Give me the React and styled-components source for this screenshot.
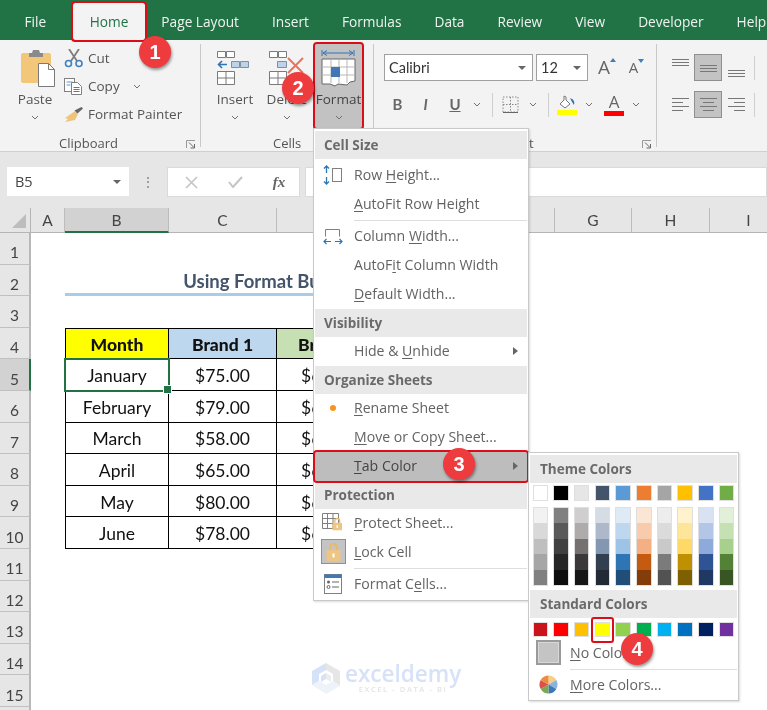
import React from 'react';
import styled, { createGlobalStyle } from 'styled-components';

const UI = "'Open Sans', 'Noto Sans', sans-serif";
const SHEET = "Lato, 'Liberation Sans', sans-serif";
const GREEN = '#217346';
const RED = '#dc0d17';

const GlobalStyle = createGlobalStyle`
    html, body {
        margin: 0;
        padding: 0;
        background: #fff;
    }
    * {
        box-sizing: border-box;
    }
`;

const Page = styled.div`
    position: relative;
    width: 767px;
    height: 710px;
    overflow: hidden;
    font-family: ${UI};
    color: #555;
    background: #fff;
    filter: blur(0.3px);
`;

const TabBar = styled.div`
    height: 40px;
    display: flex;
    align-items: flex-end;
    padding-left: 8px;
    background: ${GREEN};
`;

const Tab = styled.div`
    height: ${props => (props.$active ? '37px' : '40px')};
    line-height: ${props => (props.$active ? '37px' : '44px')};
    padding: 0 16.5px;
    font-size: 13.7px;
    white-space: nowrap;
    color: ${props => (props.$active ? GREEN : '#eef4f0')};
    background: ${props => (props.$active ? '#f3f3f3' : 'transparent')};
    outline: ${props => (props.$active ? `2px solid ${RED}` : 'none')};
    border-radius: 2px;

    &:first-child {
        padding-right: 27px;
    }
`;

const Ribbon = styled.div`
    height: 112px;
    display: flex;
    padding-top: 4px;
    background: #f3f3f3;
    border-bottom: 1px solid #cfcfcf;
`;

const Group = styled.div`
    width: ${props => props.$w}px;
    height: 103px;
    flex: none;
    display: flex;
    flex-direction: column;
    padding: ${props => props.$pad || '0'};
    border-right: ${props => (props.$last ? 'none' : '1px solid #c8c8c8')};
`;

const GroupBody = styled.div`
    height: ${props => props.$h || 84}px;
    flex: none;
    display: flex;
    flex-direction: ${props => (props.$column ? 'column' : 'row')};
    gap: ${props => props.$gap || 0}px;
`;

const GroupFooter = styled.div`
    height: 16px;
    margin-top: 6px;
    display: grid;
    grid-template-columns: ${props => (props.$left ? `${props.$left}px` : '1fr')} auto 1fr;
    align-items: center;
    font-size: 13px;
    color: #555;

    svg {
        justify-self: end;
        margin-right: 4px;
        margin-top: 2px;
    }
`;

const BigButton = styled.div`
    position: relative;
    width: ${props => props.$w}px;
    height: 84px;
    flex: none;
    display: flex;
    flex-direction: column;
    align-items: center;
    font-size: 13.5px;
    line-height: 17px;
    color: ${props => (props.$active ? '#444' : 'inherit')};
    background: ${props => (props.$active ? '#c2c2c2' : 'transparent')};
    outline: ${props => (props.$active ? `2px solid ${RED}` : 'none')};
    border-radius: 2px;
`;

const BigIcon = styled.div`
    height: 47px;
    display: flex;
    align-items: center;
    padding-left: ${props => props.$shift || 0}px;
`;

const BigChevron = styled.div`
    margin-top: 7px;
    line-height: 0;
`;

const SmallColumn = styled.div`
    display: flex;
    flex-direction: column;
`;

const SmallButton = styled.div`
    height: 28px;
    display: flex;
    align-items: center;
    font-size: 13.5px;
    white-space: nowrap;
`;

const SmallIcon = styled.span`
    width: 24px;
    flex: none;
    line-height: 0;
`;

const SplitChevron = styled.span`
    margin-left: 13px;
    line-height: 0;
`;

const ToolRow = styled.div`
    height: 27px;
    display: flex;
    align-items: center;
`;

const Combo = styled.div`
    width: ${props => props.$w}px;
    height: 27px;
    flex: none;
    margin-right: ${props => props.$gap || 0}px;
    display: flex;
    align-items: center;
    justify-content: space-between;
    padding: 0 6px 0 4px;
    background: #fff;
    border: 1px solid #a0a0a0;
    font-family: ${SHEET};
    font-size: 14.5px;
    color: #333;
`;

const Caret = styled.span`
    width: 0;
    height: 0;
    border-left: 4px solid transparent;
    border-right: 4px solid transparent;
    border-top: 4px solid #666;
`;

const Tool = styled.div`
    width: ${props => props.$w}px;
    height: 27px;
    flex: none;
    display: flex;
    flex-direction: column;
    align-items: center;
    justify-content: center;
    line-height: 0;
    color: #666;
    font-family: ${SHEET};
    background: ${props => (props.$on ? '#c3c3c3' : 'transparent')};
    border: 1px solid ${props => (props.$on ? '#8f8f8f' : 'transparent')};
`;

const ToolLetter = styled.span`
    font-size: ${props => props.$size || 15}px;
    line-height: ${props => props.$size || 15}px;
    font-weight: ${props => (props.$plain ? 400 : 700)};
    font-style: ${props => (props.$italic ? 'italic' : 'normal')};
    text-decoration: ${props => (props.$under ? 'underline' : 'none')};
    font-family: ${props => (props.$plain ? UI : SHEET)};
`;

const ColorBar = styled.span`
    width: 20px;
    height: 5px;
    margin-top: 1px;
    background: ${props => props.$color};
`;

const Sized = styled.span`
    display: flex;
    align-items: flex-start;
`;

const SizeArrow = styled.span`
    width: 0;
    height: 0;
    margin-top: ${props => (props.$down ? -1 : 0)}px;
    border-left: 3.5px solid transparent;
    border-right: 3.5px solid transparent;
    border-bottom: ${props => (props.$down ? 'none' : '4px solid #3d7ebd')};
    border-top: ${props => (props.$down ? '4px solid #3d7ebd' : 'none')};
`;

const ToolSep = styled.span`
    width: 1px;
    height: 24px;
    flex: none;
    margin-left: ${props => props.$l}px;
    margin-right: 6px;
    background: #cfcfcf;
`;

const FormulaBar = styled.div`
    height: 56px;
    display: flex;
    align-items: flex-start;
    padding-top: 15px;
    background: #e6e6e6;
`;

const NameBox = styled.div`
    width: 122px;
    height: 29px;
    margin-left: 7px;
    display: flex;
    align-items: center;
    justify-content: space-between;
    padding: 0 8px;
    background: #fff;
    font-size: 14.5px;
    color: #444;
`;

const Grip = styled.div`
    width: 38px;
    height: 29px;
    display: flex;
    align-items: center;
    justify-content: center;
    font-size: 14px;
    color: #888;
    line-height: 1;
`;

const FxBox = styled.div`
    width: 133px;
    height: 30px;
    display: flex;
    align-items: center;
    background: #fff;
    border: 1px solid #dadada;
`;

const FxSlot = styled.span`
    width: 44px;
    flex: none;
    display: flex;
    justify-content: center;
    font-family: 'Liberation Serif', serif;
    font-style: italic;
    font-weight: 700;
    font-size: 15px;
    color: #666;
    margin-left: ${props => props.$l || 0}px;
`;

const FormulaInput = styled.div`
    flex: 1;
    height: 30px;
    margin-left: 5px;
    background: #fff;
    border: 1px solid #dadada;
`;

const GRID_COLUMNS = '31px 34px 104px 108px 104px 87px 87px 77px 78px 78px';

const Row = styled.div`
    display: grid;
    grid-template-columns: ${GRID_COLUMNS};
    height: ${props => props.$h || 31.6}px;
`;

const Corner = styled.div`
    position: relative;
    background: #e6e6e6;
    border-right: 1px solid #b5b5b5;
    border-bottom: 1px solid #b5b5b5;
    display: flex;
    align-items: flex-end;
    justify-content: flex-end;
    padding: 0 4px 4px 0;
`;

const ColHead = styled.div`
    display: flex;
    align-items: center;
    justify-content: center;
    font-family: ${SHEET};
    font-size: 15.5px;
    color: #444;
    background: ${props => (props.$sel ? '#d2d2d2' : '#e6e6e6')};
    border-right: 1px solid #bcbcbc;
    border-bottom: ${props => (props.$sel ? `2px solid ${GREEN}` : '1px solid #b5b5b5')};
`;

const RowHead = styled.div`
    display: flex;
    align-items: center;
    justify-content: center;
    padding-top: 8px;
    font-family: ${SHEET};
    font-size: 15.5px;
    color: #444;
    background: ${props => (props.$sel ? '#d2d2d2' : '#e6e6e6')};
    border-right: 2px solid ${props => (props.$sel ? GREEN : '#b8b8b8')};
    border-bottom: 1px solid #c0c0c0;
`;

const Title = styled.div`
    grid-column: span 4;
    display: flex;
    align-items: center;
    justify-content: center;
    padding: 5px 0 0 4px;
    font-family: ${SHEET};
    font-size: 18.5px;
    font-weight: 700;
    color: #44546a;
    border-bottom: 3px solid #a9cce8;
`;

const Cell = styled.div`
    position: relative;
    z-index: ${props => (props.$selected ? 1 : 0)};
    display: flex;
    align-items: center;
    justify-content: center;
    padding-top: 2px;
    font-family: ${SHEET};
    font-size: 17.5px;
    font-weight: ${props => (props.$bold ? 900 : 400)};
    color: #111;
    background: ${props => props.$fill || '#fff'};
    border-right: 1px solid #000;
    border-bottom: 1px solid #000;
    border-top: ${props => (props.$top ? '1px solid #000' : 'none')};
    border-left: ${props => (props.$first ? '1px solid #000' : 'none')};
    outline: ${props => (props.$selected ? `2px solid ${GREEN}` : 'none')};
    outline-offset: -1px;

    ${props =>
        props.$selected &&
        `&::after {
            content: '';
            position: absolute;
            right: -4px;
            bottom: -4px;
            width: 7px;
            height: 7px;
            background: ${GREEN};
            border: 1px solid #fff;
        }`}
`;

const Menu = styled.div`
    position: absolute;
    left: 313px;
    top: 128px;
    width: 216px;
    height: 473px;
    padding: 2px 1px;
    background: #fff;
    border: 1px solid #c9c9c9;
    box-shadow: 1px 1px 2px rgba(0, 0, 0, 0.15);
    z-index: 3;
`;

const MenuHeader = styled.div`
    height: 28px;
    margin-bottom: ${props => props.$after || 0}px;
    margin-top: ${props => props.$before || 0}px;
    display: flex;
    align-items: center;
    padding-left: ${props => props.$pad || 9}px;
    font-size: 13.5px;
    font-weight: 700;
    color: #6a6a6a;
    background: #e9e9e9;
`;

const MenuItem = styled.div`
    position: relative;
    height: 29px;
    margin-top: ${props => props.$before || 0}px;
    padding-bottom: 2px;
    display: flex;
    align-items: center;
    font-size: 14.1px;
    color: ${props => (props.$active ? '#444' : '#636363')};
    white-space: nowrap;
    background: ${props => (props.$active ? '#bdbdbd' : 'transparent')};
    outline: ${props => (props.$active ? `2px solid ${RED}` : 'none')};
    border-radius: 2px;

    u {
        text-underline-offset: 2px;
    }
`;

const ItemIcon = styled.span`
    width: ${props => props.$w || 39}px;
    flex: none;
    display: flex;
    justify-content: center;
    padding-right: 3px;
`;

const ItemArrow = styled.span`
    width: 0;
    height: 0;
    margin-left: auto;
    margin-right: 9px;
    border-top: 4.5px solid transparent;
    border-bottom: 4.5px solid transparent;
    border-left: 5px solid #666;
`;

const MenuLine = styled.div`
    height: 1px;
    margin: 1px 0 1px ${props => props.$l || 39}px;
    background: #dedede;
`;

const Dot = styled.span`
    width: 6px;
    height: 6px;
    border-radius: 50%;
    background: #f7941d;
`;

const Submenu = styled.div`
    position: absolute;
    left: 528px;
    top: 452px;
    width: 211px;
    height: 249px;
    padding: 2px 1px;
    background: #fff;
    border: 1px solid #c9c9c9;
    box-shadow: 1px 1px 2px rgba(0, 0, 0, 0.15);
    z-index: 4;
`;

const SwatchGrid = styled.div`
    display: grid;
    grid-template-columns: repeat(10, 15.6px);
    column-gap: 5.1px;
    padding-left: 2.5px;
    margin-top: ${props => props.$top}px;
`;

const Swatch = styled.div`
    position: relative;
    height: ${props => props.$h || 16}px;
    background: ${props => props.$color};
    border: 1px solid #dfdfdf;

    ${props =>
        props.$marked &&
        `&::after {
            content: '';
            position: absolute;
            inset: -6px -5px -7px -5px;
            border: 2px solid ${RED};
            border-radius: 3px;
        }`}
`;

const ShadeColumn = styled.div`
    display: flex;
    flex-direction: column;
    border: 1px solid #dfdfdf;
`;

const Shade = styled.div`
    height: 15.4px;
    background: ${props => props.$color};
`;

const NoColorBox = styled.span`
    width: 25px;
    height: 25px;
    background: #c4c4c4;
    border: 2px solid #9a9a9a;
    box-shadow: inset 0 0 0 1px #d8d8d8;
`;

const Badge = styled.div`
    position: absolute;
    left: ${props => props.$x - 16}px;
    top: ${props => props.$y - 16}px;
    width: 32px;
    height: 32px;
    display: flex;
    align-items: center;
    justify-content: center;
    border-radius: 50%;
    background: #ee3b3e;
    color: #fff;
    font-family: 'Liberation Sans', sans-serif;
    font-weight: 700;
    font-size: 20px;
    box-shadow: 1px 2px 3px rgba(0, 0, 0, 0.4);
    z-index: 6;
`;

const Watermark = styled.div`
    position: absolute;
    left: 312px;
    top: 663px;
    display: flex;
    gap: 5px;
    z-index: 2;
`;

const WatermarkText = styled.div`
    display: flex;
    flex-direction: column;
    align-items: center;
`;

const WatermarkName = styled.span`
    font-family: ${UI};
    font-size: 22.5px;
    line-height: 22px;
    font-weight: 600;
    color: #d7e2f8;
`;

const WatermarkTag = styled.span`
    font-family: ${UI};
    font-size: 7.5px;
    line-height: 9px;
    font-weight: 600;
    letter-spacing: 1.6px;
    color: #e4e4e4;
`;

/* ---- icons ---- */

const Chevron = () => (
    <svg width="8" height="5" viewBox="0 0 8 5">
        <path d="M1 1l3 3 3-3" fill="none" stroke="#707070" strokeWidth="1" />
    </svg>
);

const Launcher = () => (
    <svg width="10" height="9" viewBox="0 0 10 9">
        <path d="M.5 8V.5H9" fill="none" stroke="#999" />
        <path d="M3 2.500l5 5M8.500 4v4h-4" fill="none" stroke="#666" />
    </svg>
);

const PasteIcon = () => (
    <svg width="36" height="38" viewBox="0 0 36 38">
        <rect x="1" y="4" width="30" height="30" rx="2" fill="#f2c77a" />
        <path d="M9 4h3l1-3h6l1 3h3v4H9z" fill="#8a8a8a" />
        <path d="M18.500 14.500h10l6 6v17h-16z" fill="#fff" stroke="#7a7a7a" />
        <path d="M28.500 14.500v6h6" fill="none" stroke="#7a7a7a" />
    </svg>
);

const CutIcon = () => (
    <svg width="20" height="19" viewBox="0 0 20 19">
        <path d="M5 0l8 12M15 0L7 12" stroke="#7d7d7d" strokeWidth="1.8" fill="none" />
        <circle cx="4.500" cy="14.500" r="3" fill="none" stroke="#3f7ebf" strokeWidth="1.6" />
        <circle cx="15" cy="14.500" r="3" fill="none" stroke="#3f7ebf" strokeWidth="1.6" />
    </svg>
);

const CopyIcon = () => (
    <svg width="19" height="17" viewBox="0 0 19 17">
        <rect x=".5" y=".5" width="10" height="13" fill="#fff" stroke="#808080" />
        <path d="M2.500 4h6M2.500 7h4" stroke="#5b9bd5" />
        <path d="M7.500 4.500h6l4 4v8h-10z" fill="#fff" stroke="#808080" />
        <path d="M9.500 9.500h6M9.500 11.500h6M9.500 13.500h6" stroke="#3f7ebf" />
    </svg>
);

const PainterIcon = () => (
    <svg width="20" height="17" viewBox="0 0 20 17">
        <path d="M11 5l3 3-3 6-10 2 3-3-3-1 3-2z" fill="#eec47b" />
        <path d="M10.500 4.500l3 3L19 2.500 17.500 1z" fill="#666" />
    </svg>
);

const CellStack = ({ children }) => (
    <svg width="36" height="34" viewBox="0 0 36 34">
        <path d="M.5.500h8v6h-8zM9.500.500h8v6h-8z" fill="#fff" stroke="#7a7a7a" />
        <path d="M.5 20.500h17v13H.5zM9 20.500v13M.5 27h17" fill="#fff" stroke="#7a7a7a" />
        {children}
    </svg>
);

const InsertIcon = () => (
    <CellStack>
        <path d="M14.500 10.500h8v6h-8zM23.500 10.500h8v6h-8z" fill="#bcd3ea" stroke="#7f8f9f" />
        <path d="M1 13.500h9M5 10l-3.500 3.500L5 17" fill="none" stroke="#2e75b6" strokeWidth="1.600" />
    </CellStack>
);

const DeleteIcon = () => (
    <CellStack>
        <path d="M8.500 10.500h9v6h-9z" fill="#bcd3ea" stroke="#7f8f9f" />
        <path d="M19 7l15 15M34 7L19 22" stroke="#e8735f" strokeWidth="2" fill="none" />
    </CellStack>
);

const FormatIcon = () => (
    <svg width="36" height="38" viewBox="0 0 36 38">
        <path d="M1 1v6M33 1v6M2 4h30M6 1.500L2 4l4 2.500M28 1.500L32 4l-4 2.500" fill="none" stroke="#2e75b6" />
        <path d="M1 10h33v22l-5 1-3 3-9-1-3 2-5-2H1z" fill="#fff" stroke="#666" />
        <path d="M1 18h33M1 26h33M10 10v24M18 10v24M26 10v24" stroke="#b8b8b8" />
        <rect x="10" y="18" width="9" height="10" fill="#3f78b5" />
    </svg>
);

const BordersIcon = () => (
    <svg width="17" height="17" viewBox="0 0 17 17">
        <path d="M1 1h15v15H1zM8.500 1v15M1 8.500h15" fill="none" stroke="#888" strokeDasharray="1.500 1.500" />
        <path d="M1 16.500h15" stroke="#666" />
    </svg>
);

const FillIcon = () => (
    <svg width="20" height="14" viewBox="0 0 20 14">
        <path d="M7 1l2 1v3l4 4-5 4-5-4 4-4z" fill="#fff" stroke="#777" />
        <path d="M13 3c3 1 5 3 4 7l-2-3z" fill="#2e75b6" />
    </svg>
);

const LINE_SETS = {
    top: { y: [1, 4, 7], x: [[1, 18], [1, 18], [1, 18]] },
    middle: { y: [7, 10, 13], x: [[1, 18], [1, 18], [1, 18]] },
    bottom: { y: [12, 15, 18], x: [[1, 18], [1, 18], [1, 18]] },
    left: { y: [3, 7, 11, 15], x: [[1, 18], [1, 12], [1, 18], [1, 12]] },
    center: { y: [3, 7, 11, 15], x: [[1, 18], [4, 15], [1, 18], [4, 15]] },
    right: { y: [3, 7, 11, 15], x: [[1, 18], [7, 18], [1, 18], [7, 18]] }
};

const AlignIcon = ({ kind }) => {
    const set = LINE_SETS[kind];
    return (
        <svg width="19" height="20" viewBox="0 0 19 20">
            {set.y.map((y, i) => (
                <path key={y} d={`M${set.x[i][0]} ${y}.5H${set.x[i][1]}`} stroke="#777" />
            ))}
        </svg>
    );
};

const RowHeightIcon = () => (
    <svg width="20" height="20" viewBox="0 0 20 20">
        <path d="M3.500 1v7M1 3.500l2.500-2.500L6 3.500M3.500 12v7M1 16.500L3.500 19 6 16.500" fill="none" stroke="#2e75b6" strokeWidth="1.300" />
        <rect x="9.500" y="3.500" width="9" height="13" fill="none" stroke="#808080" />
    </svg>
);

const ColWidthIcon = () => (
    <svg width="20" height="18" viewBox="0 0 20 18">
        <path d="M2.500 9.500v-7h14v7" fill="none" stroke="#808080" />
        <path d="M1 14.500h7M3.500 12L1 14.500 3.500 17M12 14.500h7M16.500 12l2.500 2.500-2.500 2.500" fill="none" stroke="#2e75b6" strokeWidth="1.200" />
    </svg>
);

const Padlock = ({ x, y, s = 1 }) => (
    <g transform={`translate(${x} ${y}) scale(${s})`}>
        <path d="M2.500 5V3a2.500 2.500 0 015 0v2" fill="none" stroke="#e8b96b" strokeWidth="1.400" />
        <rect x="0" y="5" width="10" height="8" rx="1" fill="#efc583" />
        <rect x="4.300" y="7.500" width="1.400" height="3" fill="#fff" />
    </g>
);

const ProtectIcon = () => (
    <svg width="22" height="20" viewBox="0 0 22 20">
        <path d="M.5.500h16v15H.5zM.5 5.500h16M.5 10.500h16M5.500.5v15M11 .5v15" fill="none" stroke="#808080" />
        <Padlock x={10.500} y={5} s={0.95} />
    </svg>
);

const LockBox = styled.span`
    width: 25px;
    height: 25px;
    display: flex;
    align-items: center;
    justify-content: center;
    background: #c4c4c4;
    border: 1px solid #8f8f8f;
`;

const LockIcon = () => (
    <svg width="15" height="18" viewBox="0 0 10 13">
        <Padlock x={0} y={0} />
    </svg>
);

const FormatCellsIcon = () => (
    <svg width="18" height="20" viewBox="0 0 18 20">
        <rect x=".5" y=".5" width="17" height="19" fill="#fff" stroke="#808080" />
        <rect x=".5" y=".5" width="17" height="3.500" fill="#3f78b5" />
        <path d="M8 8h7M8 13h7" stroke="#666" />
        <circle cx="4.500" cy="8" r="1.500" fill="#666" />
        <circle cx="4.500" cy="13" r="1.500" fill="none" stroke="#666" />
    </svg>
);

const PieIcon = () => (
    <svg width="19" height="19" viewBox="0 0 19 19">
        <path d="M9.500 9.500V.5a9 9 0 017.800 4.500z" fill="#f3cf89" />
        <path d="M9.500 9.500l7.800-4.500a9 9 0 010 9z" fill="#8bb4dd" />
        <path d="M9.500 9.500l7.800 4.500a9 9 0 01-7.800 4.500z" fill="#3f78b5" />
        <path d="M9.500 9.500v9a9 9 0 01-7.800-4.500z" fill="#78a85a" />
        <path d="M9.500 9.500l-7.800 4.500a9 9 0 010-9z" fill="#d9534a" />
        <path d="M9.500 9.500L1.700 5A9 9 0 019.500.5z" fill="#ed8b3f" />
    </svg>
);

const LogoMark = () => (
    <svg width="28" height="31" viewBox="0 0 28 31">
        <path d="M14 0L0 8v14l7-4v-7l7-4z" fill="#d6e2f7" />
        <path d="M14 0l14 8v15l-7-5v-7l-7-4z" fill="#e6e6e6" />
        <path d="M0 22l14 9 14-8-7-5-7 4-7-4z" fill="#eef3fb" />
        <path d="M9 13l5-3v6l-5 3z" fill="#d6e2f7" />
        <path d="M14 10l5 3v6l-5-3z" fill="#ececec" />
    </svg>
);

const CornerMark = () => (
    <svg width="14" height="14" viewBox="0 0 14 14">
        <path d="M14 0v14H0z" fill="#bdbdbd" />
    </svg>
);

/* ---- data ---- */

const TABS = ['File', 'Home', 'Page Layout', 'Insert', 'Formulas', 'Data', 'Review', 'View', 'Developer', 'Help'];
const COLS = ['A', 'B', 'C', 'D', 'E', 'F', 'G', 'H', 'I'];
const TABLE = {
    5: ['January', '$75.00', '$60.00'],
    6: ['February', '$79.00', '$65.00'],
    7: ['March', '$58.00', '$62.00'],
    8: ['April', '$65.00', '$68.00'],
    9: ['May', '$80.00', '$60.00'],
    10: ['June', '$78.00', '$69.00']
};
const ROWS = Array.from({ length: 15 }, (_, i) => i + 1);

const THEME = [
    ['#ffffff', ['#f2f2f2', '#d9d9d9', '#bfbfbf', '#a6a6a6', '#808080']],
    ['#000000', ['#808080', '#595959', '#404040', '#262626', '#0d0d0d']],
    ['#e7e6e6', ['#d0cece', '#aeabab', '#757171', '#3a3838', '#171717']],
    ['#44546a', ['#d6dce4', '#adb9ca', '#8497b0', '#323f4f', '#222b35']],
    ['#5b9bd5', ['#deebf6', '#bdd7ee', '#9dc3e6', '#2e75b5', '#1f4e79']],
    ['#ed7d31', ['#fbe5d5', '#f7cbac', '#f4b083', '#c55a11', '#843c0b']],
    ['#a5a5a5', ['#ededed', '#dbdbdb', '#c9c9c9', '#7b7b7b', '#525252']],
    ['#ffc000', ['#fff2cc', '#fee599', '#ffd965', '#bf9000', '#7f6000']],
    ['#4472c4', ['#d9e2f3', '#b4c6e7', '#8eaadb', '#2f5496', '#1f3864']],
    ['#70ad47', ['#e2efd9', '#c5e0b3', '#a8d08d', '#538135', '#375623']]
];
const STANDARD = ['#c8141a', '#ff0000', '#ffc000', '#ffff00', '#92d050', '#00b050', '#00b0f0', '#0070c0', '#002060', '#7030a0'];

const SheetRow = ({ n }) => {
    const data = TABLE[n];
    const selected = n === 5;
    return (
        <Row>
            <RowHead $sel={selected}>{n}</RowHead>
            <div />
            {n === 2 && <Title>Using Format Button</Title>}
            {n === 4 && (
                <>
                    <Cell $bold $top $first $fill="#ffff00">Month</Cell>
                    <Cell $bold $top $fill="#bdd7ee">Brand 1</Cell>
                    <Cell $bold $top $fill="#c6e0b4">Brand 2</Cell>
                </>
            )}
            {data && (
                <>
                    <Cell $first $selected={selected}>{data[0]}</Cell>
                    <Cell>{data[1]}</Cell>
                    <Cell>{data[2]}</Cell>
                </>
            )}
        </Row>
    );
};

const ClipboardGroup = () => (
    <Group $w={201} $pad="0 0 0 8px">
        <GroupBody $gap={2}>
            <BigButton $w={54}>
                <BigIcon $shift={6}><PasteIcon /></BigIcon>
                Paste
                <BigChevron><Chevron /></BigChevron>
            </BigButton>
            <SmallColumn>
                <SmallButton><SmallIcon><CutIcon /></SmallIcon>Cut</SmallButton>
                <SmallButton>
                    <SmallIcon><CopyIcon /></SmallIcon>Copy
                    <SplitChevron><Chevron /></SplitChevron>
                </SmallButton>
                <SmallButton><SmallIcon><PainterIcon /></SmallIcon>Format Painter</SmallButton>
            </SmallColumn>
        </GroupBody>
        <GroupFooter $left={51}><span />Clipboard<Launcher /></GroupFooter>
    </Group>
);

const CellsGroup = () => (
    <Group $w={173} $pad="0 0 0 10px">
        <GroupBody $gap={3}>
            <BigButton $w={48}>
                <BigIcon><InsertIcon /></BigIcon>
                Insert
                <BigChevron><Chevron /></BigChevron>
            </BigButton>
            <BigButton $w={50}>
                <BigIcon><DeleteIcon /></BigIcon>
                Delete
                <BigChevron><Chevron /></BigChevron>
            </BigButton>
            <BigButton $w={47} $active>
                <BigIcon><FormatIcon /></BigIcon>
                Format
                <BigChevron><Chevron /></BigChevron>
            </BigButton>
        </GroupBody>
        <GroupFooter $left={62}><span />Cells<span /></GroupFooter>
    </Group>
);

const FontGroup = () => (
    <Group $w={283} $pad="10px 0 0 10px">
        <GroupBody $column $gap={10} $h={74}>
            <ToolRow>
                <Combo $w={149} $gap={3}>Calibri<Caret /></Combo>
                <Combo $w={52} $gap={4}>12<Caret /></Combo>
                <Tool $w={30}>
                    <Sized><ToolLetter $plain $size={19}>A</ToolLetter><SizeArrow /></Sized>
                </Tool>
                <Tool $w={29}>
                    <Sized><ToolLetter $plain $size={15}>A</ToolLetter><SizeArrow $down /></Sized>
                </Tool>
            </ToolRow>
            <ToolRow>
                <Tool $w={27}><ToolLetter>B</ToolLetter></Tool>
                <Tool $w={29}><ToolLetter $italic>I</ToolLetter></Tool>
                <Tool $w={30}><ToolLetter $under>U</ToolLetter></Tool>
                <Tool $w={14}><Chevron /></Tool>
                <ToolSep $l={8} />
                <Tool $w={22}><BordersIcon /></Tool>
                <Tool $w={24}><Chevron /></Tool>
                <ToolSep $l={3} />
                <Tool $w={24}><FillIcon /><ColorBar $color="#ffff00" /></Tool>
                <Tool $w={20}><Chevron /></Tool>
                <Tool $w={30}><ToolLetter $plain $size={17}>A</ToolLetter><ColorBar $color="#ff0000" /></Tool>
                <Tool $w={14}><Chevron /></Tool>
            </ToolRow>
        </GroupBody>
        <GroupFooter><span />Font<Launcher /></GroupFooter>
    </Group>
);

const AlignmentGroup = () => (
    <Group $w={110} $last $pad="10px 0 0 10px">
        <GroupBody $column $gap={10}>
            <ToolRow>
                <Tool $w={27}><AlignIcon kind="top" /></Tool>
                <Tool $w={28} $on><AlignIcon kind="middle" /></Tool>
                <Tool $w={29}><AlignIcon kind="bottom" /></Tool>
                <ToolSep $l={3} />
            </ToolRow>
            <ToolRow>
                <Tool $w={27}><AlignIcon kind="left" /></Tool>
                <Tool $w={28} $on><AlignIcon kind="center" /></Tool>
                <Tool $w={29}><AlignIcon kind="right" /></Tool>
                <ToolSep $l={3} />
            </ToolRow>
        </GroupBody>
    </Group>
);

const FormatMenu = () => (
    <Menu>
        <MenuHeader $after={2}>Cell Size</MenuHeader>
        <MenuItem><ItemIcon><RowHeightIcon /></ItemIcon><span>Row <u>H</u>eight...</span></MenuItem>
        <MenuItem><ItemIcon /><span><u>A</u>utoFit Row Height</span></MenuItem>
        <MenuLine />
        <MenuItem><ItemIcon><ColWidthIcon /></ItemIcon><span>Column <u>W</u>idth...</span></MenuItem>
        <MenuItem><ItemIcon /><span>AutoF<u>i</u>t Column Width</span></MenuItem>
        <MenuItem><ItemIcon /><span><u>D</u>efault Width...</span></MenuItem>
        <MenuHeader>Visibility</MenuHeader>
        <MenuItem><ItemIcon /><span>Hide &amp; <u>U</u>nhide</span><ItemArrow /></MenuItem>
        <MenuHeader>Organize Sheets</MenuHeader>
        <MenuItem><ItemIcon><Dot /></ItemIcon><span><u>R</u>ename Sheet</span></MenuItem>
        <MenuItem><ItemIcon /><span><u>M</u>ove or Copy Sheet...</span></MenuItem>
        <MenuItem $active><ItemIcon /><span><u>T</u>ab Color</span><ItemArrow /></MenuItem>
        <MenuHeader>Protection</MenuHeader>
        <MenuItem><ItemIcon><ProtectIcon /></ItemIcon><span><u>P</u>rotect Sheet...</span></MenuItem>
        <MenuItem><ItemIcon><LockBox><LockIcon /></LockBox></ItemIcon><span><u>L</u>ock Cell</span></MenuItem>
        <MenuLine />
        <MenuItem><ItemIcon><FormatCellsIcon /></ItemIcon><span>Format C<u>e</u>lls...</span></MenuItem>
    </Menu>
);

const ColorMenu = () => (
    <Submenu>
        <MenuHeader $pad={10}>Theme Colors</MenuHeader>
        <SwatchGrid $top={2}>
            {THEME.map(([base]) => <Swatch key={base} $color={base} />)}
        </SwatchGrid>
        <SwatchGrid $top={6}>
            {THEME.map(([base, shades]) => (
                <ShadeColumn key={base}>
                    {shades.map((c, i) => <Shade key={i} $color={c} />)}
                </ShadeColumn>
            ))}
        </SwatchGrid>
        <MenuHeader $pad={10} $before={4}>Standard Colors</MenuHeader>
        <SwatchGrid $top={4}>
            {STANDARD.map(c => <Swatch key={c} $h={15} $color={c} $marked={c === '#ffff00'} />)}
        </SwatchGrid>
        <MenuItem $before={2}>
            <ItemIcon $w={40}><NoColorBox /></ItemIcon>
            <span><u>N</u>o Color</span>
        </MenuItem>
        <MenuLine $l={40} />
        <MenuItem>
            <ItemIcon $w={40}><PieIcon /></ItemIcon>
            <span><u>M</u>ore Colors...</span>
        </MenuItem>
    </Submenu>
);

const App = () => (
    <Page>
        <GlobalStyle />
        <TabBar>
            {TABS.map(t => <Tab key={t} $active={t === 'Home'}>{t}</Tab>)}
        </TabBar>
        <Ribbon>
            <ClipboardGroup />
            <CellsGroup />
            <FontGroup />
            <AlignmentGroup />
        </Ribbon>
        <FormulaBar>
            <NameBox>B5<Caret /></NameBox>
            <Grip>⋮</Grip>
            <FxBox>
                <FxSlot $l={1}>
                    <svg width="13" height="13" viewBox="0 0 13 13"><path d="M1 1l11 11M12 1L1 12" stroke="#c4c4c4" strokeWidth="1.600" /></svg>
                </FxSlot>
                <FxSlot>
                    <svg width="15" height="12" viewBox="0 0 15 12"><path d="M1 6l4 5 9-10" fill="none" stroke="#c4c4c4" strokeWidth="2" /></svg>
                </FxSlot>
                <FxSlot>fx</FxSlot>
            </FxBox>
            <FormulaInput />
        </FormulaBar>
        <Row $h={25}>
            <Corner><CornerMark /></Corner>
            {COLS.map(c => <ColHead key={c} $sel={c === 'B'}>{c}</ColHead>)}
        </Row>
        {ROWS.map(n => <SheetRow key={n} n={n} />)}
        <Row><RowHead /></Row>

        <FormatMenu />
        <ColorMenu />

        <Watermark>
            <LogoMark />
            <WatermarkText>
                <WatermarkName>exceldemy</WatermarkName>
                <WatermarkTag>EXCEL - DATA - BI</WatermarkTag>
            </WatermarkText>
        </Watermark>

        <Badge $x={155} $y={52}>1</Badge>
        <Badge $x={298} $y={88}>2</Badge>
        <Badge $x={459} $y={464}>3</Badge>
        <Badge $x={637} $y={649}>4</Badge>
    </Page>
);

export default App;
